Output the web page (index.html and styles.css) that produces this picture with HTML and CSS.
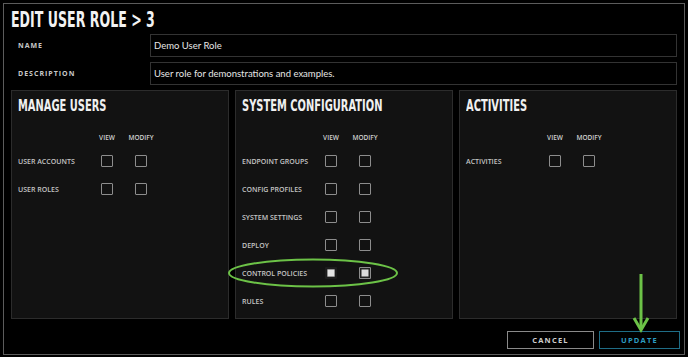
FILE: index.html
```html
<!DOCTYPE html>
<html lang="en">

<head>
    <meta charset="UTF-8">
    <meta name="viewport" content="width=device-width, initial-scale=1.0">
    <title>Edit User Role</title>
    <link rel="stylesheet" href="styles.css">
</head>

<body>
    <div class="modal">
        <h1 class="modal-title"><span>EDIT USER ROLE &gt; 3</span></h1>

        <div class="field">
            <label for="role-name">NAME</label>
            <input type="text" id="role-name" value="Demo User Role">
        </div>
        <div class="field">
            <label for="role-desc">DESCRIPTION</label>
            <input type="text" id="role-desc" value="User role for demonstrations and examples.">
        </div>

        <div class="panels">
            <section class="panel">
                <h2><span>MANAGE USERS</span></h2>
                <div class="perm-grid">
                    <span></span><span class="col-head">VIEW</span><span class="col-head">MODIFY</span>
                    <span class="perm-name">USER ACCOUNTS</span><span class="cell"><input type="checkbox"></span><span class="cell"><input type="checkbox"></span>
                    <span class="perm-name">USER ROLES</span><span class="cell"><input type="checkbox"></span><span class="cell"><input type="checkbox"></span>
                </div>
            </section>

            <section class="panel">
                <h2><span>SYSTEM CONFIGURATION</span></h2>
                <div class="perm-grid">
                    <span></span><span class="col-head">VIEW</span><span class="col-head">MODIFY</span>
                    <span class="perm-name">ENDPOINT GROUPS</span><span class="cell"><input type="checkbox"></span><span class="cell"><input type="checkbox"></span>
                    <span class="perm-name">CONFIG PROFILES</span><span class="cell"><input type="checkbox"></span><span class="cell"><input type="checkbox"></span>
                    <span class="perm-name">SYSTEM SETTINGS</span><span class="cell"><input type="checkbox"></span><span class="cell"><input type="checkbox"></span>
                    <span class="perm-name">DEPLOY</span><span class="cell"><input type="checkbox"></span><span class="cell"><input type="checkbox"></span>
                    <span class="perm-name">CONTROL POLICIES</span><span class="cell"><input type="checkbox" class="view-on" checked></span><span class="cell"><input type="checkbox" checked></span>
                    <span class="perm-name">RULES</span><span class="cell"><input type="checkbox"></span><span class="cell"><input type="checkbox"></span>
                </div>
            </section>

            <section class="panel">
                <h2><span>ACTIVITIES</span></h2>
                <div class="perm-grid">
                    <span></span><span class="col-head">VIEW</span><span class="col-head">MODIFY</span>
                    <span class="perm-name">ACTIVITIES</span><span class="cell"><input type="checkbox"></span><span class="cell"><input type="checkbox"></span>
                </div>
            </section>
        </div>

        <div class="actions">
            <button type="button" class="btn">CANCEL</button>
            <button type="button" class="btn btn-primary">UPDATE</button>
        </div>
    </div>

    <!-- annotation drawn over the screenshot -->
    <svg class="marks" width="688" height="357" viewBox="0 0 688 357">
        <ellipse cx="313" cy="273" rx="84" ry="13.5" fill="none" stroke="#6cc247" stroke-width="2"/>
        <line x1="641" y1="274" x2="641" y2="328" stroke="#6cc247" stroke-width="3"/>
        <polyline points="634,318 641,330 648,318" fill="none" stroke="#6cc247" stroke-width="3" stroke-linejoin="miter"/>
    </svg>
</body>

</html>
```

FILE: styles.css
```css
/* dark admin modal */
body {
    margin: 0;
    background: #000;
    font-family: "Open Sans", Arial, sans-serif;
    color: #ddd;
}

.modal {
    margin: 3px;
    padding: 5px 7px 0 7px;
    border: 1px solid #5c5c5c;
    box-sizing: border-box;
    width: 682px;
    height: 352px;
}

/* headings use a squeezed DejaVu to get the condensed look */
.modal-title {
    margin: 0 0 3px 0;
    font-family: "DejaVu Sans", sans-serif;
    font-size: 21px;
    line-height: 22px;
    font-weight: bold;
    color: #f2f2f2;
    white-space: nowrap;
}

.modal-title span,
.panel h2 span {
    display: inline-block;
    transform: scaleX(0.6);
    transform-origin: left center;
}

.field {
    display: flex;
    align-items: center;
    margin-bottom: 5px;
}

.field label {
    width: 132px;
    padding-left: 7px;
    font-size: 7px;
    font-weight: 700;
    letter-spacing: 1px;
    color: #c8c8c8;
}

.field input {
    flex: 1;
    height: 23px;
    box-sizing: border-box;
    background: #000;
    border: 1px solid #333;
    color: #e6e6e6;
    font-family: Lato, "Open Sans", sans-serif;
    font-size: 9.5px;
    padding: 0 3px;
    outline: none;
}

.panels {
    display: flex;
    gap: 6px;
    margin-top: 1px;
}

.panel {
    flex: 1;
    min-width: 0;
    height: 229px;
    box-sizing: border-box;
    background: #121212;
    border: 1px solid #2c2c2c;
    padding: 5px 6px;
}

.panel h2 {
    margin: 0 0 11px 0;
    font-family: "DejaVu Sans", sans-serif;
    font-size: 16.5px;
    line-height: 20px;
    font-weight: bold;
    color: #f0f0f0;
    white-space: nowrap;
}

.perm-grid {
    display: grid;
    grid-template-columns: 72px 34px 34px;
    grid-template-rows: 20px;
    grid-auto-rows: 28px;
    align-items: center;
}

.col-head {
    text-align: center;
    font-size: 6.5px;
    font-weight: 600;
    color: #d0d0d0;
}

.perm-name {
    font-size: 7px;
    font-weight: 600;
    color: #c4c4c4;
    white-space: nowrap;
}

.cell {
    display: flex;
    justify-content: center;
}

.cell input {
    appearance: none;
    -webkit-appearance: none;
    margin: 0;
    width: 12px;
    height: 12px;
    box-sizing: border-box;
    border: 1.5px solid #8d8d8d;
    border-radius: 1px;
    background: transparent;
}

.cell input:checked {
    background: #dcdcdc;
    box-shadow: inset 0 0 0 1.5px #222;
}

.cell input.view-on:checked {
    border: 2px solid #1c1c1c;
    box-shadow: inset 0 0 0 0.5px #444;
    background: #e4e4e4;
}

.actions {
    display: flex;
    justify-content: flex-end;
    gap: 5px;
    margin-top: 12px;
    margin-right: -3px;
}

.btn {
    height: 18px;
    width: 87px;
    background: #000;
    border: 1px solid #8a8a8a;
    color: #cfcfcf;
    font-family: "Open Sans", Arial, sans-serif;
    font-size: 7.5px;
    font-weight: 700;
    letter-spacing: 1.2px;
    padding: 0;
}

.btn-primary {
    width: 81px;
    border-color: #1f6d86;
    color: #2c9cc2;
}

.marks {
    position: absolute;
    left: 0;
    top: 0;
    pointer-events: none;
}
```
